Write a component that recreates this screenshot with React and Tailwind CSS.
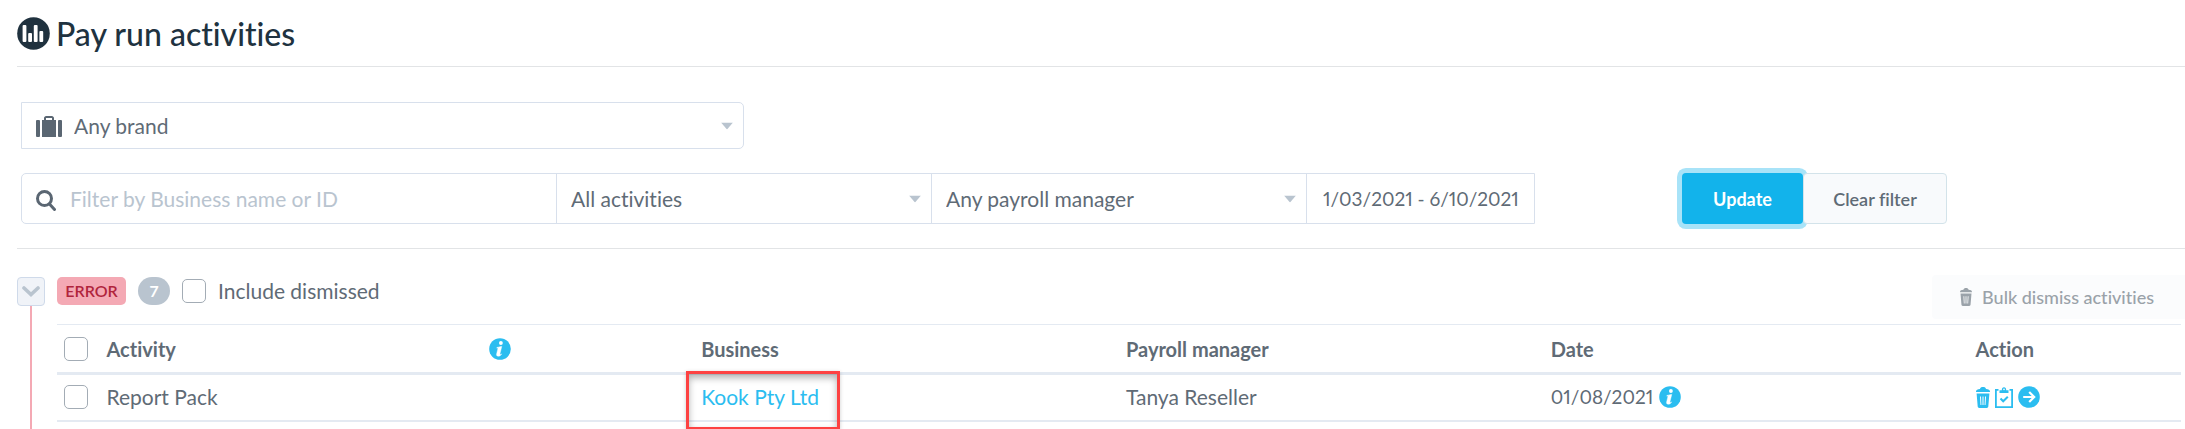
import { useState } from "react";

const COLUMNS = [
  { label: "Business", width: "w-[20%]" },
  { label: "Payroll manager", width: "w-[20%]" },
  { label: "Date", width: "w-[20%]" },
  { label: "Action", width: "w-[10%]" },
];

const ROWS = [
  { id: 1, activity: "Report Pack", business: "Kook Pty Ltd", manager: "Tanya Reseller", date: "01/08/2021" },
];

function ChartIcon() {
  return (
    <svg viewBox="0 0 33 33" className="size-[33px] shrink-0" aria-hidden="true">
      <circle cx="16.5" cy="16.5" r="16.3" fill="#20323f" />
      <g fill="#fff">
        <rect x="5.6" y="8" width="3.8" height="17" rx="1" />
        <rect x="11.2" y="16" width="3.8" height="9" rx="1" />
        <rect x="16.8" y="8" width="3.8" height="17" rx="1" />
        <rect x="22.4" y="14" width="3.8" height="11" rx="1" />
      </g>
    </svg>
  );
}

function SuitcaseIcon({ className }) {
  return (
    <svg viewBox="0 0 26 21" className={className} fill="#5a6672" aria-hidden="true">
      <rect x="0" y="4" width="4" height="17" rx="1" />
      <rect x="22" y="4" width="4" height="17" rx="1" />
      <path d="M6 4h2V2.2C8 1 9 0 10.200 0h5.600C17 0 18 1 18 2.200V4h2v17H6zM10 4h6V2h-6z" />
    </svg>
  );
}

function SearchIcon({ className }) {
  return (
    <svg viewBox="0 0 20 21" className={className} fill="none" stroke="#5a6672" aria-hidden="true">
      <circle cx="8.500" cy="8.500" r="7" strokeWidth="3" />
      <path d="M13.500 14l5 5.500" strokeWidth="3" strokeLinecap="round" />
    </svg>
  );
}

function CaretIcon() {
  return (
    <svg
      viewBox="0 0 12 7"
      className="pointer-events-none absolute right-[10px] top-1/2 h-[7px] w-3 -translate-y-1/2"
      aria-hidden="true"
    >
      <path d="M0 0h12L6 7z" fill="#b9c4cf" />
    </svg>
  );
}

function TrashIcon({ className }) {
  return (
    <svg viewBox="0 0 14 21" className={className} fill="currentColor" aria-hidden="true">
      <path d="M4 2C4.300.600 5.300 0 7 0s2.700.600 3 2c2.400.100 4 .900 4 2.600V5H0v-.400C0 2.900 1.600 2.100 4 2z" />
      <path
        fillRule="evenodd"
        d="M.600 6.500h12.800l-1.100 13.100c-.100.800-.700 1.400-1.500 1.400H3.200c-.800 0-1.400-.600-1.500-1.400zM4 9.500l.500 8.500h.900L5 9.500zm2.500 0V18h1V9.500zm2.500 0L8.600 18h.900l.500-8.500z"
      />
    </svg>
  );
}

function InfoIcon() {
  return (
    <svg viewBox="0 0 22 22" className="size-[22px] shrink-0" aria-hidden="true">
      <circle cx="11" cy="11" r="10.800" fill="#2bbdf0" />
      <circle cx="11.900" cy="5" r="1.900" fill="#fff" />
      <path
        d="M8.300 9.300c1.700-.200 3-.900 4.500-.900l-1.900 7.600c-.100.700.600.500 1.900-.100-1 1.500-2.200 2.300-3.600 2.300-1.400 0-1.900-1-1.600-2.300l1.200-5c.200-.800-.200-.900-1.200-.800z"
        fill="#fff"
        stroke="#fff"
        strokeWidth=".4"
      />
    </svg>
  );
}

function ClipboardIcon() {
  return (
    <svg viewBox="0 0 18 21" className="h-[21px] w-[18px]" fill="none" stroke="currentColor" aria-hidden="true">
      <path d="M3.500 2.800H.900v17.300h16.200V2.800h-2.600" strokeWidth="1.800" />
      <path d="M4.500 6V3.200h2.300C6.800 1.500 7.600.200 9 .200s2.200 1.300 2.200 3h2.300V6z" fill="currentColor" stroke="none" />
      <circle cx="9" cy="2.400" r=".8" fill="#fff" stroke="none" />
      <path d="M5.500 11.500l2.700 2.800 4.600-4.600" strokeWidth="2" />
    </svg>
  );
}

function ArrowIcon() {
  return (
    <svg viewBox="0 0 22 22" className="size-[22px]" aria-hidden="true">
      <circle cx="11" cy="11" r="10.800" fill="currentColor" />
      <path d="M5.200 11h10.300M11.200 6l5 5-5 5" fill="none" stroke="#fff" strokeWidth="2.200" />
    </svg>
  );
}

function Checkbox({ label, checked, onChange }) {
  return (
    <input
      type="checkbox"
      aria-label={label}
      checked={checked}
      onChange={(e) => onChange(e.target.checked)}
      className="block size-6 shrink-0 appearance-none rounded-[5px] border border-[#a3acb5] bg-white checked:bg-[#12b3eb]"
    />
  );
}

function FilterSelect({ label, options }) {
  return (
    <div className="relative w-[375px] border-r border-[#d8e0ec]">
      <select aria-label={label} className="h-full w-full appearance-none bg-transparent pl-[14px] pr-8 outline-none">
        {options.map((option) => (
          <option key={option}>{option}</option>
        ))}
      </select>
      <CaretIcon />
    </div>
  );
}

export default function App() {
  const [search, setSearch] = useState("");
  const [range, setRange] = useState("1/03/2021 - 6/10/2021");
  const [open, setOpen] = useState(true);
  const [dismissed, setDismissed] = useState(false);
  const [selected, setSelected] = useState([]);

  const toggleRow = (id, on) => setSelected((ids) => (on ? [...ids, id] : ids.filter((i) => i !== id)));

  return (
    <main className="overflow-hidden bg-white pl-[17px] font-['Lato','Open_Sans',sans-serif] text-[21px] leading-7 text-[#5f6b76] proportional-nums [font-variant-ligatures:none]">
      <header className="flex items-center gap-[6px] border-b border-[#e2e4e6] pb-4 pt-[17px]">
        <ChartIcon />
        <h1 className="text-[32px] font-medium leading-[33px] text-[#20323f]">Pay run activities</h1>
      </header>

      <form className="border-b border-[#e2e4e6] pb-6 pl-1 pt-[35px]" onSubmit={(e) => e.preventDefault()}>
        <div className="relative h-[47px] w-[723px] rounded-r-[5px] border border-[#d8e0ec]">
          <SuitcaseIcon className="pointer-events-none absolute left-[14px] top-[13px] h-[21px] w-[26px]" />
          <select
            aria-label="Brand"
            className="h-full w-full appearance-none bg-transparent pl-[52px] pr-8 outline-none"
          >
            <option>Any brand</option>
          </select>
          <CaretIcon />
        </div>

        <div className="mt-6 flex">
          <div className="flex h-[51px] rounded-l-[5px] border border-[#d8e0ec]">
            <label className="flex w-[535px] items-center gap-[14px] border-r border-[#d8e0ec] pl-[14px]">
              <SearchIcon className="mt-1 h-[21px] w-5 shrink-0" />
              <input
                type="text"
                aria-label="Filter by Business name or ID"
                placeholder="Filter by Business name or ID"
                value={search}
                onChange={(e) => setSearch(e.target.value)}
                className="h-full w-full bg-transparent outline-none placeholder:text-[#b9c4cf]"
              />
            </label>
            <FilterSelect label="Activities" options={["All activities"]} />
            <FilterSelect label="Payroll manager" options={["Any payroll manager"]} />
            <input
              type="text"
              aria-label="Date range"
              value={range}
              onChange={(e) => setRange(e.target.value)}
              className="w-[227px] bg-transparent pl-4 text-[19px] proportional-nums outline-none"
            />
          </div>
          <div className="ml-[147px] flex text-lg">
            <button
              type="submit"
              className="w-[121px] rounded-[4px] bg-[#12b3eb] font-bold text-white ring-[5px] ring-[#a8e3f8]"
            >
              Update
            </button>
            <button
              type="button"
              onClick={() => setSearch("")}
              className="relative w-[144px] rounded-[4px] border border-[#d3e3ea] bg-[#f8fafc] font-semibold"
            >
              Clear filter
            </button>
          </div>
        </div>
      </form>

      <section className="flex gap-3 pt-[26px]">
        <div className="mt-[2px] flex w-7 shrink-0 flex-col items-center">
          <button
            type="button"
            aria-label="Toggle errors"
            aria-expanded={open}
            onClick={() => setOpen(!open)}
            className="flex h-[29px] w-7 shrink-0 items-center justify-center rounded-[4px] border border-[#cfdaea] bg-[#f0f3f8]"
          >
            <svg viewBox="0 0 18 11" className="h-[11px] w-[18px]" aria-hidden="true">
              <path d="M2 2l7 6.500L16 2" fill="none" stroke="#b9c4cf" strokeWidth="3.600" strokeLinecap="round" />
            </svg>
          </button>
          <div className="w-[2px] flex-1 bg-[#f4a9b4]" />
        </div>

        <div className="min-w-0 flex-1">
          <div className="flex items-start justify-between pb-[5px]">
            <div className="mt-[2px] flex h-7 items-center gap-3">
              <span className="flex h-7 w-[69px] items-center justify-center rounded-[5px] bg-[#f4a9b4] text-base font-semibold text-[#b0243c]">
                ERROR
              </span>
              <span className="flex h-7 w-8 items-center justify-center rounded-full bg-[#b9c4cf] text-base font-bold text-white">
                7
              </span>
              <label className="flex items-center gap-3">
                <Checkbox label="Include dismissed" checked={dismissed} onChange={setDismissed} />
                Include dismissed
              </label>
            </div>
            <button
              type="button"
              className="flex h-11 items-center gap-[10px] rounded-l-[4px] bg-[#fbfcfd] pl-7 pr-[31px] text-lg font-medium text-[#9aa2a9]"
            >
              <TrashIcon className="h-[18px] w-3" />
              Bulk dismiss activities
            </button>
          </div>

          {open && (
            <div className="pb-2 pr-1">
              <table className="w-full table-fixed border-t border-[#e4eaf2] text-left">
                <thead>
                  <tr className="h-[49px] border-b-[3px] border-[#e4eaf2]">
                    <th className="w-[2%] pl-[7px]">
                      <Checkbox
                        label="Select all activities"
                        checked={selected.length === ROWS.length}
                        onChange={(on) => setSelected(on ? ROWS.map((r) => r.id) : [])}
                      />
                    </th>
                    <th className="w-[18%] pl-[7px] text-xl font-bold">Activity</th>
                    <th className="w-[10%] pl-[7px]">
                      <InfoIcon />
                    </th>
                    {COLUMNS.map((col) => (
                      <th key={col.label} className={`${col.width} pl-[7px] text-xl font-bold`}>
                        {col.label}
                      </th>
                    ))}
                  </tr>
                </thead>
                <tbody>
                  {ROWS.map((row) => (
                    <tr key={row.id} className="h-[47px] border-b-2 border-[#e4eaf2]">
                      <td className="pl-[7px]">
                        <Checkbox
                          label={`Select ${row.activity}`}
                          checked={selected.includes(row.id)}
                          onChange={(on) => toggleRow(row.id, on)}
                        />
                      </td>
                      <td className="pl-[7px]" colSpan={2}>
                        {row.activity}
                      </td>
                      <td className="relative pl-[7px]">
                        <a href="#business" className="text-[#2bbdf0]">
                          {row.business}
                        </a>
                        <span className="pointer-events-none absolute -left-2 -top-1 h-[59px] w-[154px] border-[3px] border-[#fd4242] shadow-[0_1px_4px_rgba(0,0,0,0.2),inset_0_4px_7px_rgba(0,0,0,0.3)]" />
                      </td>
                      <td className="pl-[7px]">{row.manager}</td>
                      <td className="pl-[7px]">
                        <div className="flex items-center gap-[6px] text-[19px]">
                          {row.date}
                          <InfoIcon />
                        </div>
                      </td>
                      <td className="pl-[7px]">
                        <div className="flex items-center gap-[5px] text-[#2bbdf0]">
                          <button type="button" aria-label="Dismiss">
                            <TrashIcon className="h-[21px] w-[14px]" />
                          </button>
                          <button type="button" aria-label="Mark as done">
                            <ClipboardIcon />
                          </button>
                          <a href="#activity" aria-label="Go to activity">
                            <ArrowIcon />
                          </a>
                        </div>
                      </td>
                    </tr>
                  ))}
                </tbody>
              </table>
            </div>
          )}
        </div>
      </section>
    </main>
  );
}
